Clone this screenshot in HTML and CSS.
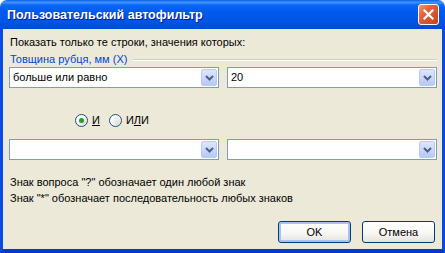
FILE: index.html
```html
<!DOCTYPE html>
<html lang="ru">
	<head>
		<meta charset="UTF-8" />
		<meta name="viewport" content="width=device-width, initial-scale=1.0" />
		<title>Пользовательский автофильтр</title>

		<link rel="stylesheet" href="styles.css">
	</head>
	<body>
		<div class="window">
			<div class="titlebar">
				<span class="title">Пользовательский автофильтр</span>
				<span class="close">
					<svg width="11" height="11" viewBox="0 0 11 11">
						<path d="M1.5 1.5 L9.5 9.5 M9.5 1.5 L1.5 9.5" stroke="#fff" stroke-width="2.2" stroke-linecap="square" />
					</svg>
				</span>
			</div>
			<div class="content">
				<div class="prompt">Показать только те строки, значения которых:</div>
				<div class="group">
					<span class="group-label">Товщина рубця, мм (X)</span>
					<span class="group-line"></span>
				</div>
				<div class="row row-first">
					<div class="combo">
						<span class="combo-text">больше или равно</span>
						<span class="combo-btn">
							<svg width="9" height="6" viewBox="0 0 9 6"><path d="M1 1 L4.5 4.5 L8 1" fill="none" stroke="#4d6185" stroke-width="2" /></svg>
						</span>
					</div>
					<div class="combo">
						<span class="combo-text">20</span>
						<span class="combo-btn">
							<svg width="9" height="6" viewBox="0 0 9 6"><path d="M1 1 L4.5 4.5 L8 1" fill="none" stroke="#4d6185" stroke-width="2" /></svg>
						</span>
					</div>
				</div>
				<div class="radios">
					<label class="radio">
						<span class="radio-circle checked"></span>
						<span><u>И</u></span>
					</label>
					<label class="radio">
						<span class="radio-circle"></span>
						<span>И<u>Л</u>И</span>
					</label>
				</div>
				<div class="row row-second">
					<div class="combo">
						<span class="combo-text"></span>
						<span class="combo-btn">
							<svg width="9" height="6" viewBox="0 0 9 6"><path d="M1 1 L4.5 4.5 L8 1" fill="none" stroke="#4d6185" stroke-width="2" /></svg>
						</span>
					</div>
					<div class="combo">
						<span class="combo-text"></span>
						<span class="combo-btn">
							<svg width="9" height="6" viewBox="0 0 9 6"><path d="M1 1 L4.5 4.5 L8 1" fill="none" stroke="#4d6185" stroke-width="2" /></svg>
						</span>
					</div>
				</div>
				<div class="hints">
					<div>Знак вопроса "?" обозначает один любой знак</div>
					<div>Знак "*" обозначает последовательность любых знаков</div>
				</div>
				<div class="buttons">
					<button class="btn btn-default">OK</button>
					<button class="btn">Отмена</button>
				</div>
			</div>
		</div>
	</body>
</html>
```

FILE: styles.css
```css
body {
	margin: 0;
	background: #fff;
	font-family: 'Liberation Sans', Arial, sans-serif;
	font-size: 11px;
}

.window {
	width: 445px;
	height: 253px;
	display: flex;
	flex-direction: column;
}

.titlebar {
	height: 29px;
	box-sizing: border-box;
	display: flex;
	align-items: center;
	justify-content: space-between;
	padding: 0 6px 0 7px;
	border-radius: 7px 7px 0 0;
	background: linear-gradient(#0a5fe4 0%, #3d95ff 8%, #0a66f4 18%, #0058ee 45%, #0055e5 75%, #0149d2 100%);
}
.title {
	color: #fff;
	font-weight: bold;
	font-size: 12.5px;
	text-shadow: 1px 1px #0f1a89;
}
.close {
	width: 21px;
	height: 21px;
	box-sizing: border-box;
	border: 1px solid #fff;
	border-radius: 3px;
	background: linear-gradient(135deg, #f09a7c 0%, #e2623c 35%, #c9421c 100%);
	display: flex;
	align-items: center;
	justify-content: center;
}

.content {
	flex: 1;
	display: flex;
	flex-direction: column;
	background: #ece9d8;
	border-left: 3px solid #0a4ae4;
	border-right: 3px solid #0a4ae4;
	border-bottom: 4px solid #0838c8;
	padding: 7px 5px 0 6px;
	line-height: 13px;
	color: #000;
}

.prompt {
	padding-left: 1px;
}

.group {
	display: flex;
	align-items: center;
	margin-top: 4px;
	padding-left: 1px;
}
.group-label {
	color: #0046d5;
}
.group-line {
	flex: 1;
	margin-left: 6px;
	border-top: 1px solid #d0d0bf;
	border-bottom: 1px solid #fff;
}

.row {
	display: flex;
	gap: 8px;
}
.row-first {
	margin-top: 1px;
}
.row-second {
	margin-top: 12px;
}

.combo {
	width: 210px;
	height: 21px;
	box-sizing: border-box;
	border: 1px solid #7f9db9;
	background: #fff;
	display: flex;
	align-items: center;
	padding: 1px;
}
.combo-text {
	flex: 1;
	padding-left: 2px;
}
.combo-btn {
	width: 16px;
	height: 17px;
	box-sizing: border-box;
	border: 1px solid #bccbf2;
	border-radius: 2px;
	background: linear-gradient(#dce6fd, #b6c9f7);
	display: flex;
	align-items: center;
	justify-content: center;
}

.radios {
	display: flex;
	gap: 9px;
	margin-top: 26px;
	padding-left: 66px;
	height: 13px;
}
.radio {
	display: flex;
	align-items: center;
	gap: 4px;
}
.radio-circle {
	width: 13px;
	height: 13px;
	box-sizing: border-box;
	border: 1px solid #1c5180;
	border-radius: 50%;
	background: radial-gradient(circle at 70% 70%, #e0ded3, #fff 70%);
	display: flex;
	align-items: center;
	justify-content: center;
}
.radio-circle.checked::after {
	content: '';
	width: 5px;
	height: 5px;
	border-radius: 50%;
	background: #21a121;
}

.hints {
	margin-top: 16px;
	display: flex;
	flex-direction: column;
	gap: 3px;
	padding-left: 1px;
}

.buttons {
	display: flex;
	justify-content: flex-end;
	gap: 11px;
	margin-top: 16px;
	margin-right: 2px;
}
.btn {
	width: 73px;
	height: 22px;
	border: 1px solid #003c74;
	border-radius: 3px;
	background: linear-gradient(#fff 0%, #f6f6f3 60%, #e3e2da 100%);
	font-family: 'Liberation Sans', Arial, sans-serif;
	font-size: 11px;
	color: #000;
	padding: 0;
}
.btn-default {
	box-shadow: inset 0 0 0 2px #a9c2f5;
}
```
